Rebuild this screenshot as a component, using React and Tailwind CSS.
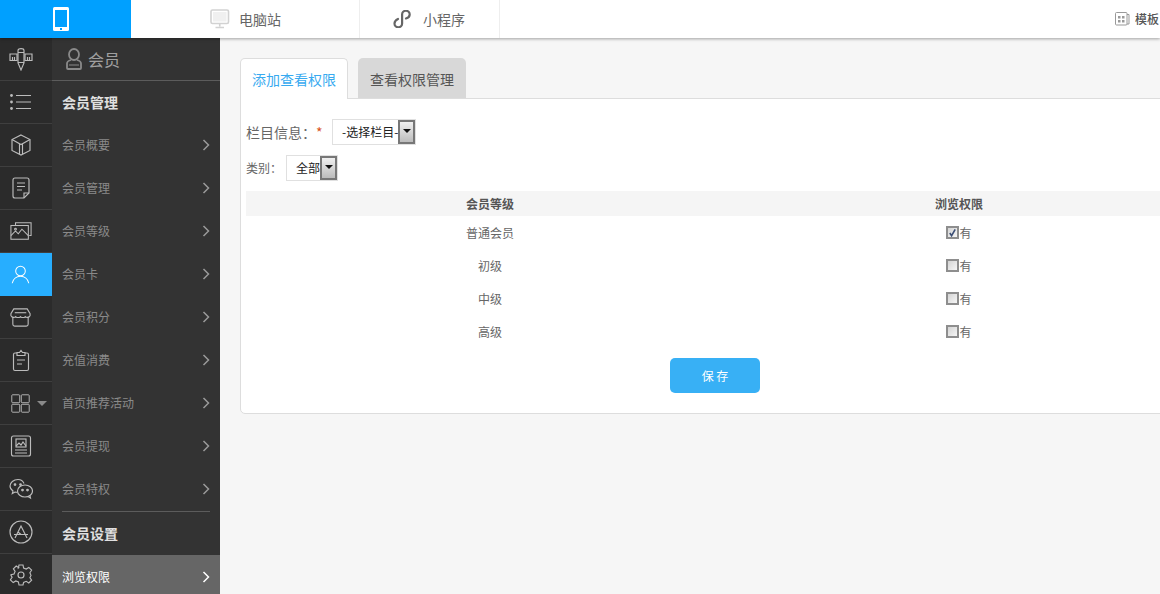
const S = (p) => ({ width: 24, height: 24, viewBox: "0 0 24 24", fill: "none", stroke: "#bcbcbc", strokeWidth: 1.150, ...p });

const railIcons = [
  <svg {...S()}><path d="M1 7h7v6.500H1zM16 7h7v6.500h-7zM3.500 10v3.500M5.500 10v3.500M18.500 10v3.500M20.500 10v3.500" /><path d="M9 3.500c0-2.500 6-2.500 6 0V16l-3 7-3-7z" /><path d="M9 5.500h6M9 15.500h6" /></svg>,
  <svg {...S()}><path d="M7 5.500h15M7 12h15M7 18.500h15" /><circle cx="2.500" cy="5.500" r="1.400" fill="#bcbcbc" stroke="none" /><circle cx="2.500" cy="12" r="1.400" fill="#bcbcbc" stroke="none" /><circle cx="2.500" cy="18.500" r="1.400" fill="#bcbcbc" stroke="none" /></svg>,
  <svg {...S()}><path d="M12 2l9 4.500v11L12 22l-9-4.500v-11z" /><path d="M3 6.500l9 5 9-5M10.500 11v10M13.500 11v10" /></svg>,
  <svg {...S()}><path d="M15 22H6a2 2 0 0 1-2-2V4a2 2 0 0 1 2-2h12a2 2 0 0 1 2 2v13z" /><path d="M8 7h8M8 10.500h8M8 14h5M15 22v-5h5" /></svg>,
  <svg {...S({ width: 22, height: 22 })}><path d="M6 6V3h17v14h-2" /><rect x="1" y="6" width="19" height="15" /><path d="M1 17l5-5 3 3 4-5 7 7" /><circle cx="6" cy="10" r="1" /></svg>,
  <svg {...S({ width: 21, height: 21, stroke: "#fff" })}><circle cx="12" cy="8" r="5.500" /><path d="M2.500 22c1-5 5-8 9.500-8s8.500 3 9.500 8" /></svg>,
  <svg {...S({ width: 23, height: 23 })}><path d="M4 11v8a2 2 0 0 0 2 2h12a2 2 0 0 0 2-2v-8" /><path d="M5 3h14l3 5v2a3 3 0 0 1-5 1 3.500 3.500 0 0 1-5 0 3.500 3.500 0 0 1-5 0 3 3 0 0 1-5-1V8z" /><path d="M6 7h12" /></svg>,
  <svg {...S()}><path d="M8 5H6a1.500 1.500 0 0 0-1.500 1.500V21A1.500 1.500 0 0 0 6 22.500h12a1.500 1.500 0 0 0 1.500-1.500V6.500A1.500 1.500 0 0 0 18 5h-2" /><path d="M8 7.500V4.500h2.500L12 2.500l1.500 2H16v3z" /><path d="M8 12h8M8 16h5" /></svg>,
  <svg {...S({ width: 19, height: 19 })}><rect x="1" y="1" width="10" height="10" rx="1" /><rect x="13" y="1" width="10" height="10" rx="1" /><rect x="1" y="13" width="10" height="10" rx="1" /><rect x="13" y="13" width="10" height="10" rx="1" /></svg>,
  <svg {...S()}><rect x="2.500" y="2" width="19" height="20" rx="2" /><rect x="7" y="5" width="10" height="8" /><path d="M7 12l3-3 2 2 2-3 3 4M6 16h12M6 19h12" /></svg>,
  <svg {...S()}><path d="M15 6.500C14 4 11.500 2.500 9 2.500 4.500 2.500 1 5.500 1 9c0 2 1.200 3.800 3 5l-.7 2.500L6 15c.8.200 1.500.300 2.500.300" /><ellipse cx="16" cy="14" rx="7.500" ry="6" /><path d="M21 18.500l.5 2.500-2.500-1.500" /><circle cx="6" cy="7.500" r=".8" fill="#bcbcbc" /><circle cx="11.500" cy="7.500" r=".8" fill="#bcbcbc" /><circle cx="13.500" cy="13" r=".8" fill="#bcbcbc" /><circle cx="18.500" cy="13" r=".8" fill="#bcbcbc" /></svg>,
  <svg {...S()}><circle cx="12" cy="12" r="11" /><path d="M6 18l6-12 6 12M5 14.500h14M9 12l3 2.500" /></svg>,
  <svg {...S()}><circle cx="12" cy="12" r="3" /><path d="M10 2h4l.6 3 2.600 1.100 2.600-1.700 2.800 2.800-1.700 2.600L22 12.400v0l-1.100 2.200 1.700 2.600-2.800 2.800-2.600-1.700-2.600 1.100L14 22h-4l-.6-3-2.600-1.100-2.600 1.700-2.800-2.800 1.700-2.600L2 12.400v-.8l3-.6 1.100-2.600-1.700-2.600 2.800-2.800 2.600 1.700L9.400 5z" /></svg>,
];

const items = ["会员概要", "会员管理", "会员等级", "会员卡", "会员积分", "充值消费", "首页推荐活动", "会员提现", "会员特权"];
const rows = [["普通会员", true], ["初级", false], ["中级", false], ["高级", false]];

function Chevron({ color = "#9a9a9a" }) {
  return (
    <svg width="8" height="12" viewBox="0 0 8 12" fill="none" stroke={color} strokeWidth="1.500"><path d="M1.500 1l5 5-5 5" /></svg>
  );
}

function MenuItem({ label }) {
  return (
    <div className="flex h-[43px] items-center justify-between px-[10px] text-[12px] text-[#8a8a8a]">
      <span>{label}</span>
      <Chevron />
    </div>
  );
}

function Select({ label, w }) {
  return (
    <div className={`flex h-[26px] items-stretch border border-[#e0e0e0] bg-white ${w}`}>
      <span className="min-w-0 flex-1 overflow-hidden whitespace-nowrap pl-[9px] text-[12px] leading-[24px] text-[#222]">{label}</span>
      <span className="flex w-[17px] shrink-0 items-center justify-center border-2 border-[#777] bg-gradient-to-b from-[#f0f0f0] to-[#bcbcbc]">
        <span className="mb-[3px] h-0 w-0 border-x-[4px] border-t-[4px] border-x-transparent border-t-[#111]" />
      </span>
    </div>
  );
}

function Check({ on }) {
  return (
    <span className="flex h-[13px] w-[13px] items-center justify-center border-2 border-[#8e8e8e] bg-gradient-to-br from-[#d4d4d4] to-[#f6f6f6]">
      {on && <svg width="10" height="10" viewBox="0 0 10 10" fill="none" stroke="#3c4f76" strokeWidth="1.800"><path d="M2 5l2 3 4-7" /></svg>}
    </span>
  );
}

export default function App() {
  return (
    <div className="flex h-[594px] w-[1160px] flex-col overflow-hidden bg-[#f6f6f6] font-['Noto_Sans_CJK_SC','Liberation_Sans',sans-serif]">
      <header className="relative z-10 flex h-[38px] shrink-0 items-stretch bg-white text-[14px] text-[#666] shadow-[0_1px_3px_rgba(0,0,0,0.35)]">
        <div className="flex w-[131px] items-center pl-[53px] bg-[#00a0ff]">
          <svg width="16" height="24" viewBox="0 0 16 24"><rect width="16" height="24" rx="1.500" fill="#fff" /><rect x="2" y="3" width="12" height="17" fill="#00a0ff" /><rect x="7" y="21" width="2" height="2" fill="#00a0ff" /></svg>
        </div>
        <div className="flex w-[229px] items-center gap-[9px] border-r border-[#eeeeee] pl-[79px]">
          <svg width="20" height="20" viewBox="0 0 20 20" fill="none" stroke="#d2d2d2" strokeWidth="1.600"><rect x="1" y="1" width="17.500" height="13.500" rx="1.500" /><rect x="3" y="3" width="13.500" height="9.500" fill="#f0f0f0" stroke="none" /><path d="M9.750 15v2.500M5.500 18.500h8.500" /></svg>
          <span>电脑站</span>
        </div>
        <div className="flex w-[140px] items-center gap-[12px] border-r border-[#eeeeee] pl-[33px]">
          <svg width="18" height="18" viewBox="0 0 18 18" fill="none" stroke="#666" strokeWidth="2.200" strokeLinecap="round"><path d="M5 9C3 10 1.500 11.500 1.500 13.500a3.800 3.800 0 0 0 7.600 0V4.500a3.800 3.800 0 0 1 7.600 0C16.700 6.500 15 8 13 8.500" /></svg>
          <span>小程序</span>
        </div>
        <div className="flex flex-1 items-center justify-end gap-[5px] whitespace-nowrap text-[#555]">
          <svg width="15" height="14" viewBox="0 0 15 14" fill="none" stroke="#999"><path d="M12 2.500h2v9.500h-2" /><rect x=".5" y=".5" width="11.500" height="12.500" rx="1" /><path d="M3 4h2.500v2.500H3zM7 4h2.500v2.500H7zM3 8h2.500v2.500H3zM7 8h2.500v2.500H7z" fill="#999" stroke="none" /></svg>
          <span className="w-[25px] overflow-hidden text-[12px] font-medium">模板</span>
        </div>
      </header>

      <div className="flex min-h-0 flex-1">
        <nav className="w-[52px] shrink-0 bg-[#2b2b2b]">
          {railIcons.map((icon, i) => (
            <div key={i} className={`relative flex h-[43px] items-center border-b ${i === 5 ? "border-[#27aeff] bg-[#27aeff]" : "border-[#3f3f3f]"}`}>
              <span className="flex w-[41px] justify-center">{icon}</span>
              {i === 8 && <span className="absolute right-[5px] top-[19px] h-0 w-0 border-x-[5px] border-t-[5px] border-x-transparent border-t-[#8a8a8a]" />}
            </div>
          ))}
        </nav>

        <aside className="flex w-[168px] shrink-0 flex-col bg-[#333333]">
          <div className="flex h-[43px] shrink-0 items-center gap-[6px] border-b border-[#5c5c5c] pl-[14px] text-[16px] text-[#a0a0a0]">
            <svg width="16" height="22" viewBox="0 0 16 22" fill="none" stroke="#8a8a8a" strokeWidth="1.800"><ellipse cx="8" cy="6.500" rx="5" ry="5.500" /><path d="M5 12c-2 .5-4 1.500-4 3.500V20a1 1 0 0 0 1 1h12a1 1 0 0 0 1-1v-4.500c0-2-2-3-4-3.500" /><path d="M3 17h10" strokeWidth="1" /></svg>
            <span>会员</span>
          </div>
          <div className="flex h-[42px] shrink-0 items-center pl-[10px] text-[14px] font-bold text-[#e0e0e0]">会员管理</div>
          {items.map((t) => <MenuItem key={t} label={t} />)}
          <div className="mx-[10px] mt-[1px] border-t border-[#5c5c5c]" />
          <div className="flex h-[43px] shrink-0 items-center pl-[10px] text-[14px] font-bold text-[#e0e0e0]">会员设置</div>
          <div className="flex flex-1 items-center justify-between bg-[#666666] px-[10px] pt-[4px] text-[12px] text-white">
            <span>浏览权限</span>
            <Chevron color="#ffffff" />
          </div>
        </aside>

        <main className="min-w-0 flex-1 pt-[20px] pl-[20px]">
          <div className="flex h-[41px] gap-[10px] text-[14px]">
            <div className="relative z-10 flex h-[41px] w-[108px] items-center justify-center rounded-t-[5px] border border-b-0 border-[#dddddd] bg-white text-[#38aaf0]">添加查看权限</div>
            <div className="flex h-[40px] w-[108px] items-center justify-center rounded-t-[5px] bg-[#d8d8d8] pt-[2px] text-[#555]">查看权限管理</div>
          </div>
          <section className="-mt-px h-[316px] w-[950px] rounded-bl-[5px] border border-[#dddddd] bg-white pl-[5px]">
            <div className="flex h-[57px] flex-col">
              <div className="flex items-center pt-[20px] text-[14px] text-[#666]">
                <span className="w-[86px] whitespace-nowrap">栏目信息：<span className="text-[#d9541e]">*</span></span>
                <Select label="-选择栏目-" w="w-[84px]" />
              </div>
            </div>
            <div className="flex h-[24px] items-center text-[12px] text-[#666]">
              <span className="w-[40px]">类别：</span>
              <Select label="全部" w="w-[52px]" />
            </div>
            <div className="mt-[11px] grid h-[25px] grid-cols-[488px_450px] items-center bg-[#f5f5f5] text-center text-[12px] font-bold text-[#555]">
              <span>会员等级</span>
              <span>浏览权限</span>
            </div>
            {rows.map(([name, on]) => (
              <div key={name} className="grid h-[33px] grid-cols-[488px_450px] items-center text-center text-[12px] text-[#666]">
                <span>{name}</span>
                <span className="flex items-center justify-center"><Check on={on} />有</span>
              </div>
            ))}
            <div className="mt-[10px] pl-[424px]">
              <button className="h-[35px] w-[90px] rounded-[5px] bg-[#38b0f5] text-[12px] text-white">保 存</button>
            </div>
          </section>
        </main>
      </div>
    </div>
  );
}
